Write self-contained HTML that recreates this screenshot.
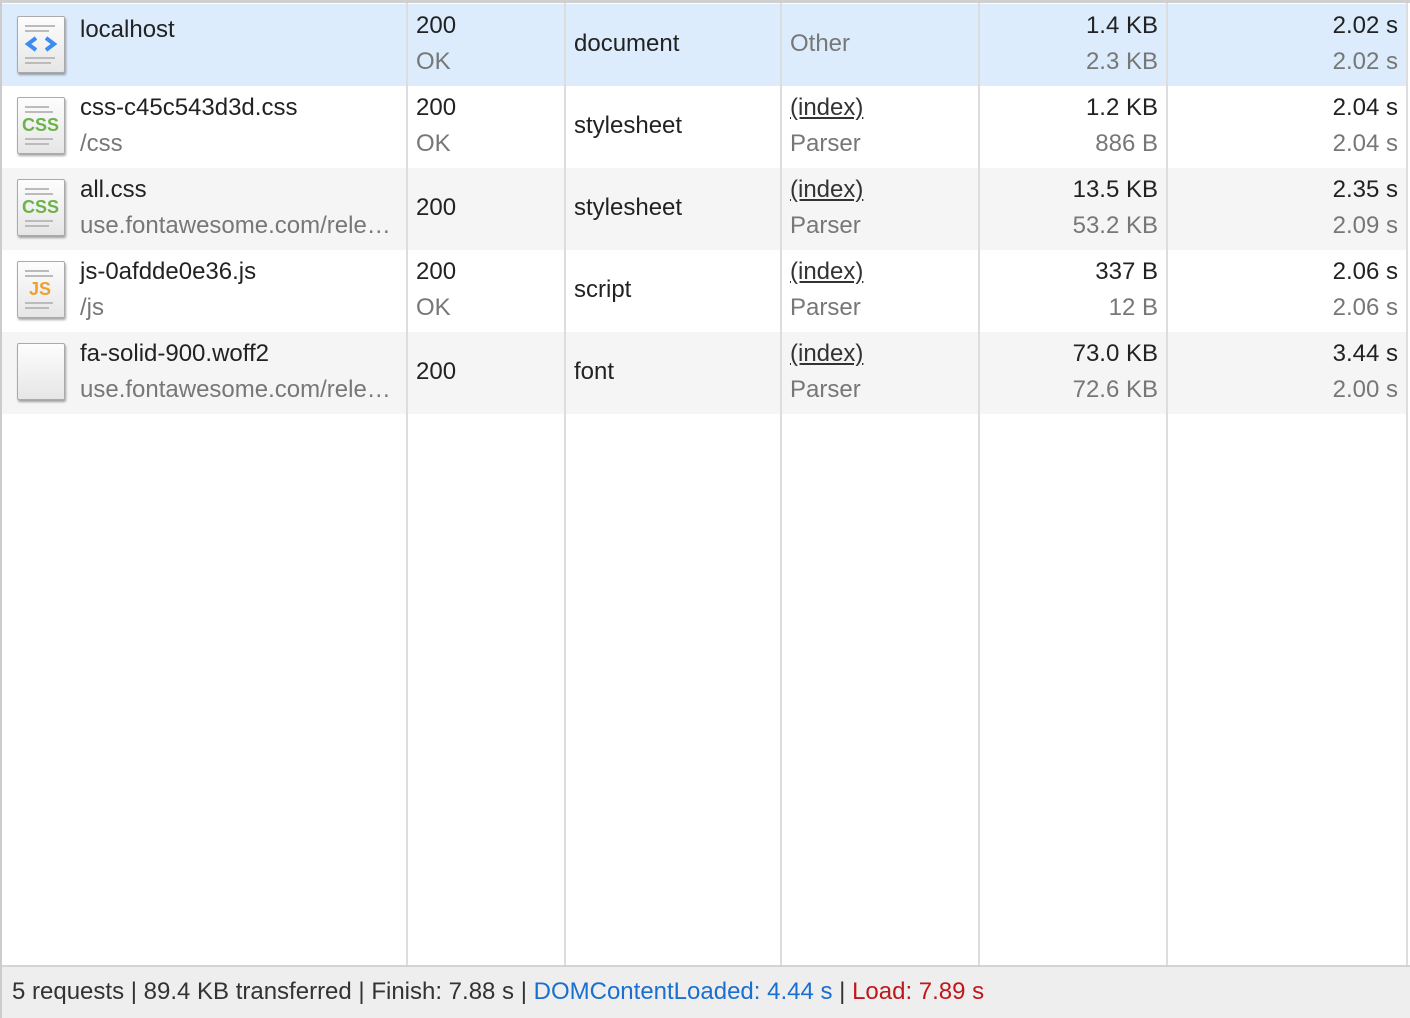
<!DOCTYPE html>
<html><head><meta charset="utf-8"><style>
*{margin:0;padding:0;box-sizing:border-box}
body{width:1410px;height:1018px;background:#fff;font-family:"Liberation Sans",sans-serif;font-size:24px;color:#222;position:relative;overflow:hidden}
.frame{position:absolute;left:0;top:0;width:1410px;height:1018px;border-left:2px solid #ccc;border-top:3px solid #d0d0d0}
.row{position:absolute;left:2px;width:1405px;height:82px}
.vl{position:absolute;top:3px;width:2px;height:962px;background:#ddd}
.t{position:absolute;white-space:nowrap;line-height:26px;margin-top:2px}
.g{color:#777}
.r{text-align:right}
.ic{position:absolute;left:17px;width:48px;height:57px;border:1px solid #aaa;border-radius:2px;background:linear-gradient(#fdfdfd,#e6e6e6);box-shadow:1px 2px 2px rgba(0,0,0,.35)}
.ln{position:absolute;left:7px;height:2px;background:#bbb}
.footer{position:absolute;left:2px;top:965px;width:1408px;height:53px;background:#eee;border-top:2px solid #d4d4d4}
u{text-decoration:underline}
.cl{width:316px;overflow:hidden}
</style></head><body>
<div class="frame"></div>
<div class="row" style="top:4px;background:#dcecfc"></div>
<div class="row" style="top:86px;background:#fff"></div>
<div class="row" style="top:168px;background:#f5f5f5"></div>
<div class="row" style="top:250px;background:#fff"></div>
<div class="row" style="top:332px;background:#f5f5f5"></div>
<div class="vl" style="left:406px"></div>
<div class="vl" style="left:564px"></div>
<div class="vl" style="left:780px"></div>
<div class="vl" style="left:978px"></div>
<div class="vl" style="left:1166px"></div>
<div class="vl" style="left:1406px"></div>

<div class="ic" style="top:16px"><div class="ln" style="top:8px;width:30px"></div><div class="ln" style="top:13px;width:24px"></div><svg style="position:absolute;left:6px;top:18px" width="34" height="18"><path d="M12 3 L4 9 L12 15" stroke="#3b8cf0" stroke-width="4" fill="none"/><path d="M22 3 L30 9 L22 15" stroke="#3b8cf0" stroke-width="4" fill="none"/></svg><div class="ln" style="top:40px;width:30px"></div><div class="ln" style="top:45px;width:26px"></div></div>
<div class="ic" style="top:97px"><div class="ln" style="top:8px;width:24px"></div><div class="ln" style="top:13px;width:28px"></div><div style="position:absolute;left:4px;top:17px;font-weight:bold;font-size:18px;color:#6bb34a">CSS</div><div class="ln" style="top:40px;width:28px"></div><div class="ln" style="top:45px;width:24px"></div></div>
<div class="ic" style="top:179px"><div class="ln" style="top:8px;width:24px"></div><div class="ln" style="top:13px;width:28px"></div><div style="position:absolute;left:4px;top:17px;font-weight:bold;font-size:18px;color:#6bb34a">CSS</div><div class="ln" style="top:40px;width:28px"></div><div class="ln" style="top:45px;width:24px"></div></div>
<div class="ic" style="top:261px"><div class="ln" style="top:8px;width:24px"></div><div class="ln" style="top:13px;width:28px"></div><div style="position:absolute;left:11px;top:17px;font-weight:bold;font-size:18px;color:#f0a030">JS</div><div class="ln" style="top:40px;width:28px"></div><div class="ln" style="top:45px;width:24px"></div></div>
<div class="ic" style="top:343px"></div>

<div class="t" style="left:80px;top:15px">localhost</div>
<div class="t" style="left:416px;top:11px">200</div><div class="t g" style="left:416px;top:47px">OK</div>
<div class="t" style="left:574px;top:29px">document</div>
<div class="t g" style="left:790px;top:29px">Other</div>
<div class="t r" style="right:252px;top:11px">1.4 KB</div><div class="t r g" style="right:252px;top:47px">2.3 KB</div>
<div class="t r" style="right:12px;top:11px">2.02 s</div><div class="t r g" style="right:12px;top:47px">2.02 s</div>

<div class="t" style="left:80px;top:93px">css-c45c543d3d.css</div><div class="t g" style="left:80px;top:129px">/css</div>
<div class="t" style="left:416px;top:93px">200</div><div class="t g" style="left:416px;top:129px">OK</div>
<div class="t" style="left:574px;top:111px">stylesheet</div>
<div class="t" style="left:790px;top:93px;color:#333"><u>(index)</u></div><div class="t g" style="left:790px;top:129px">Parser</div>
<div class="t r" style="right:252px;top:93px">1.2 KB</div><div class="t r g" style="right:252px;top:129px">886 B</div>
<div class="t r" style="right:12px;top:93px">2.04 s</div><div class="t r g" style="right:12px;top:129px">2.04 s</div>

<div class="t" style="left:80px;top:175px">all.css</div><div class="t g cl" style="left:80px;top:211px">use.fontawesome.com/rele…</div>
<div class="t" style="left:416px;top:193px">200</div>
<div class="t" style="left:574px;top:193px">stylesheet</div>
<div class="t" style="left:790px;top:175px;color:#333"><u>(index)</u></div><div class="t g" style="left:790px;top:211px">Parser</div>
<div class="t r" style="right:252px;top:175px">13.5 KB</div><div class="t r g" style="right:252px;top:211px">53.2 KB</div>
<div class="t r" style="right:12px;top:175px">2.35 s</div><div class="t r g" style="right:12px;top:211px">2.09 s</div>

<div class="t" style="left:80px;top:257px">js-0afdde0e36.js</div><div class="t g" style="left:80px;top:293px">/js</div>
<div class="t" style="left:416px;top:257px">200</div><div class="t g" style="left:416px;top:293px">OK</div>
<div class="t" style="left:574px;top:275px">script</div>
<div class="t" style="left:790px;top:257px;color:#333"><u>(index)</u></div><div class="t g" style="left:790px;top:293px">Parser</div>
<div class="t r" style="right:252px;top:257px">337 B</div><div class="t r g" style="right:252px;top:293px">12 B</div>
<div class="t r" style="right:12px;top:257px">2.06 s</div><div class="t r g" style="right:12px;top:293px">2.06 s</div>

<div class="t" style="left:80px;top:339px">fa-solid-900.woff2</div><div class="t g cl" style="left:80px;top:375px">use.fontawesome.com/rele…</div>
<div class="t" style="left:416px;top:357px">200</div>
<div class="t" style="left:574px;top:357px">font</div>
<div class="t" style="left:790px;top:339px;color:#333"><u>(index)</u></div><div class="t g" style="left:790px;top:375px">Parser</div>
<div class="t r" style="right:252px;top:339px">73.0 KB</div><div class="t r g" style="right:252px;top:375px">72.6 KB</div>
<div class="t r" style="right:12px;top:339px">3.44 s</div><div class="t r g" style="right:12px;top:375px">2.00 s</div>

<div class="footer"><div class="t" style="left:10px;top:10px;color:#333">5 requests | 89.4 KB transferred | Finish: 7.88 s | <span style="color:#1a6fd0">DOMContentLoaded: 4.44 s</span> | <span style="color:#c0171b">Load: 7.89 s</span></div></div>
</body></html>
